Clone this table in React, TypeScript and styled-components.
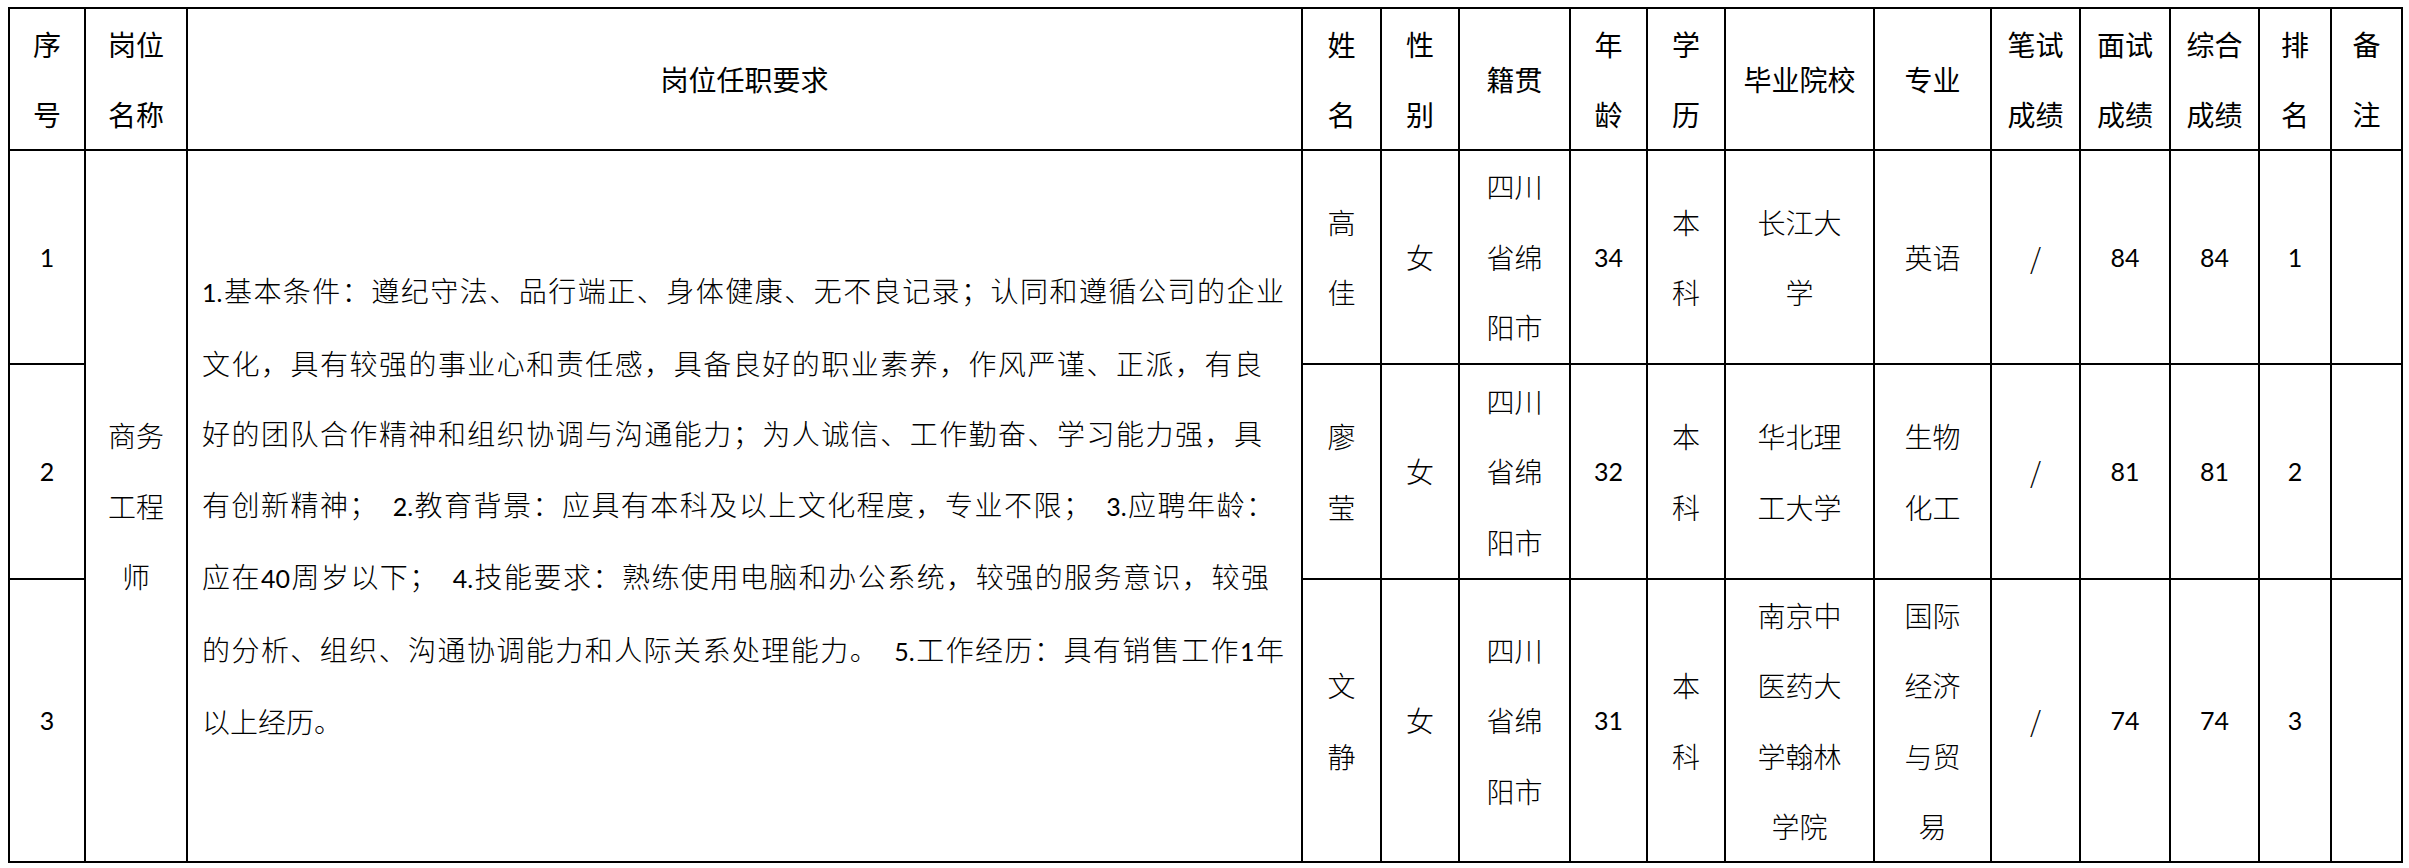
import React from 'react';
import styled, { createGlobalStyle } from 'styled-components';

const GlobalStyle = createGlobalStyle`
  html, body { margin: 0; padding: 0; background: #fff; }
  body {
    padding: 7px 0 0 8px;
    color: #000;
    font-family: "Noto Sans CJK SC", sans-serif;
  }
`;

const COLS = [76, 102, 1115, 79, 78, 111, 77, 78, 149, 117, 89, 90, 89, 72, 71];
const ROWS = [142, 214, 215, 283];

const Sheet = styled.div`
  display: grid;
  grid-template-columns: ${COLS.map((c) => `${c}px`).join(' ')};
  grid-template-rows: ${ROWS.map((r) => `${r}px`).join(' ')};
  width: max-content;
  border-top: 2px solid #000;
  border-left: 2px solid #000;
`;

const Cell = styled.div<{ $col: number; $row: number; $span?: number; $num?: boolean; $head?: boolean }>`
  grid-column: ${(p) => p.$col};
  grid-row: ${(p) => `${p.$row} / span ${p.$span ?? 1}`};
  box-sizing: border-box;
  border-right: 2px solid #000;
  border-bottom: 2px solid #000;
  display: flex;
  align-items: center;
  justify-content: center;
  text-align: center;
  font-family: ${(p) => (p.$num ? '"Lato", "Noto Sans CJK SC", sans-serif' : '"Noto Sans CJK SC", sans-serif')};
  font-size: ${(p) => (p.$num ? 25 : 28)}px;
  font-weight: ${(p) => (p.$num || p.$head ? 400 : 300)};
  line-height: 70.5px;
`;

const Duties = styled(Cell)`
  flex-direction: column;
  align-items: stretch;
  justify-content: center;
  padding: 0 17px 0 14px;
`;

const DutyLine = styled.div<{ $inset?: number; $last?: boolean }>`
  padding-right: ${(p) => p.$inset ?? 0}px;
  text-align: justify;
  text-align-last: ${(p) => (p.$last ? 'left' : 'justify')};
`;

const Num = styled.span`
  font-family: "Lato", sans-serif;
  font-size: 25px;
  font-weight: 400;
`;

const Lines = ({ lines }: { lines: string[] }) => (
  <>
    {lines.map((l, i) => (
      <React.Fragment key={i}>
        {i > 0 && <br />}
        {l}
      </React.Fragment>
    ))}
  </>
);

const header: string[][] = [
  ['序', '号'],
  ['岗位', '名称'],
  ['岗位任职要求'],
  ['姓', '名'],
  ['性', '别'],
  ['籍贯'],
  ['年', '龄'],
  ['学', '历'],
  ['毕业院校'],
  ['专业'],
  ['笔试', '成绩'],
  ['面试', '成绩'],
  ['综合', '成绩'],
  ['排', '名'],
  ['备', '注'],
];

type Person = {
  no: string;
  name: string[];
  gender: string;
  origin: string[];
  age: string;
  edu: string[];
  school: string[];
  major: string[];
  written: string;
  interview: string;
  total: string;
  rank: string;
};

const people: Person[] = [
  {
    no: '1', name: ['高', '佳'], gender: '女', origin: ['四川', '省绵', '阳市'], age: '34',
    edu: ['本', '科'], school: ['长江大', '学'], major: ['英语'], written: '/', interview: '84', total: '84', rank: '1',
  },
  {
    no: '2', name: ['廖', '莹'], gender: '女', origin: ['四川', '省绵', '阳市'], age: '32',
    edu: ['本', '科'], school: ['华北理', '工大学'], major: ['生物', '化工'], written: '/', interview: '81', total: '81', rank: '2',
  },
  {
    no: '3', name: ['文', '静'], gender: '女', origin: ['四川', '省绵', '阳市'], age: '31',
    edu: ['本', '科'], school: ['南京中', '医药大', '学翰林', '学院'], major: ['国际', '经济', '与贸', '易'],
    written: '/', interview: '74', total: '74', rank: '3',
  },
];

export default function App() {
  return (
    <>
      <GlobalStyle />
      <Sheet>
        {header.map((h, i) => (
          <Cell key={`h${i}`} $col={i + 1} $row={1} $head>
            <Lines lines={h} />
          </Cell>
        ))}

        <Cell $col={2} $row={2} $span={3}>
          <Lines lines={['商务', '工程', '师']} />
        </Cell>

        <Duties $col={3} $row={2} $span={3}>
          <DutyLine>
            <Num>1.</Num>基本条件：遵纪守法、品行端正、身体健康、无不良记录；认同和遵循公司的企业
          </DutyLine>
          <DutyLine $inset={22}>
            文化，具有较强的事业心和责任感，具备良好的职业素养，作风严谨、正派，有良
          </DutyLine>
          <DutyLine $inset={22}>
            好的团队合作精神和组织协调与沟通能力；为人诚信、工作勤奋、学习能力强，具
          </DutyLine>
          <DutyLine $inset={10}>
            有创新精神；{'\u00A0\u00A0'}<Num>2.</Num>教育背景：应具有本科及以上文化程度，专业不限；{'\u00A0\u00A0'}
            <Num>3.</Num>应聘年龄：
          </DutyLine>
          <DutyLine $inset={15}>
            应在<Num>40</Num>周岁以下；{'\u00A0\u00A0'}<Num>4.</Num>技能要求：熟练使用电脑和办公系统，较强的服务意识，较强
          </DutyLine>
          <DutyLine>
            的分析、组织、沟通协调能力和人际关系处理能力。{'\u00A0\u00A0'}<Num>5.</Num>工作经历：具有销售工作<Num>1</Num>年
          </DutyLine>
          <DutyLine $last>以上经历。</DutyLine>
        </Duties>

        {people.map((p, i) => {
          const row = i + 2;
          return (
            <React.Fragment key={p.no}>
              <Cell $col={1} $row={row} $num>{p.no}</Cell>
              <Cell $col={4} $row={row}><Lines lines={p.name} /></Cell>
              <Cell $col={5} $row={row}>{p.gender}</Cell>
              <Cell $col={6} $row={row}><Lines lines={p.origin} /></Cell>
              <Cell $col={7} $row={row} $num>{p.age}</Cell>
              <Cell $col={8} $row={row}><Lines lines={p.edu} /></Cell>
              <Cell $col={9} $row={row}><Lines lines={p.school} /></Cell>
              <Cell $col={10} $row={row}><Lines lines={p.major} /></Cell>
              <Cell $col={11} $row={row}>{p.written}</Cell>
              <Cell $col={12} $row={row} $num>{p.interview}</Cell>
              <Cell $col={13} $row={row} $num>{p.total}</Cell>
              <Cell $col={14} $row={row} $num>{p.rank}</Cell>
              <Cell $col={15} $row={row} />
            </React.Fragment>
          );
        })}
      </Sheet>
    </>
  );
}
